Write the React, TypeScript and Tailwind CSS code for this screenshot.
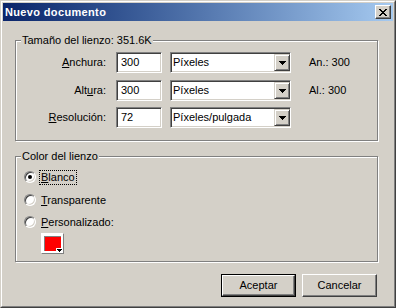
function CloseGlyph() {
  return (
    <svg width="8" height="7" viewBox="0 0 8 7" shapeRendering="crispEdges">
      <path
        fill="#000"
        d="M0 0h2v1H0z M6 0h2v1H6z M1 1h2v1H1z M5 1h2v1H5z M2 2h4v1H2z M3 3h2v1H3z M2 4h4v1H2z M1 5h2v1H1z M5 5h2v1H5z M0 6h2v1H0z M6 6h2v1H6z"
      />
    </svg>
  )
}

function DownArrow() {
  return (
    <svg width="7" height="4" viewBox="0 0 7 4" shapeRendering="crispEdges">
      <path fill="#000" d="M0 0h7v1H0z M1 1h5v1H1z M2 2h3v1H2z M3 3h1v1H3z" />
    </svg>
  )
}

function TextBox({ value }: { value: string }) {
  return (
    <div className="ml-[10px] flex h-[21px] w-[46px] items-center border border-t-[#808080] border-l-[#808080] border-b-white border-r-white bg-white pl-[4px] shadow-[inset_1px_1px_0_#404040,inset_-1px_-1px_0_#d4d0c8]">
      {value}
    </div>
  )
}

function Combo({ value }: { value: string }) {
  return (
    <div className="ml-[8px] flex h-[21px] w-[121px] items-center border border-t-[#808080] border-l-[#808080] border-b-white border-r-white bg-white pl-[2px] shadow-[inset_1px_1px_0_#404040,inset_-1px_-1px_0_#d4d0c8]">
      <span className="flex-1">{value}</span>
      <div className="flex h-[17px] w-[16px] items-center justify-center border border-t-[#d4d0c8] border-l-[#d4d0c8] border-b-[#404040] border-r-[#404040] bg-[#d4d0c8] shadow-[inset_1px_1px_0_#fff,inset_-1px_-1px_0_#808080]">
        <DownArrow />
      </div>
    </div>
  )
}

function Radio({ checked, focused, children }: { checked?: boolean; focused?: boolean; children: React.ReactNode }) {
  return (
    <div className="flex h-[16px] items-center pl-[8px]">
      <div className="flex h-[12px] w-[12px] items-center justify-center rounded-full border border-t-[#808080] border-l-[#808080] border-b-white border-r-white bg-white shadow-[inset_1px_1px_0_#404040,inset_-1px_-1px_0_#d4d0c8]">
        {checked && <div className="h-[4px] w-[4px] rounded-full bg-black" />}
      </div>
      <span
        className={
          focused
            ? "ml-[3px] border border-dotted border-black px-px leading-[13px]"
            : "ml-[3px] border border-transparent px-px leading-[13px]"
        }
      >
        {children}
      </span>
    </div>
  )
}

export default function App() {
  return (
    <div className="h-[308px] w-[396px] border border-t-[#d4d0c8] border-l-[#d4d0c8] border-b-[#404040] border-r-[#404040] bg-[#d4d0c8] font-['Liberation_Sans',Arial,sans-serif] text-[11px] text-black">
      <div className="flex h-full flex-col border border-t-white border-l-white border-b-[#808080] border-r-[#808080] p-px">
        {/* title bar */}
        <div className="flex h-[18px] items-center bg-gradient-to-r from-[#0a246a] to-[#a6caf0] pl-[2px] pr-[2px]">
          <span className="flex-1 font-bold tracking-[0.35px] text-white">Nuevo documento</span>
          <div className="flex h-[14px] w-[16px] items-center justify-center border border-t-white border-l-white border-b-[#404040] border-r-[#404040] bg-[#d4d0c8] shadow-[inset_-1px_-1px_0_#808080]">
            <CloseGlyph />
          </div>
        </div>

        <div className="flex flex-col pl-[12px] pr-[15px] pt-[13px]">
          {/* canvas size */}
          <fieldset className="border border-[#808080] pb-[12px] pt-[5px] shadow-[1px_1px_0_#fff,inset_1px_1px_0_#fff]">
            <legend className="ml-[5px] bg-[#d4d0c8] px-px leading-[13px]">Tamaño del lienzo: 351.6K</legend>
            <div className="flex h-[21px] items-center">
              <span className="w-[90px] text-right">
                <u>A</u>nchura:
              </span>
              <TextBox value="300" />
              <Combo value="Píxeles" />
              <span className="ml-[18px]">An.: 300</span>
            </div>
            <div className="mt-[7px] flex h-[21px] items-center">
              <span className="w-[90px] text-right">
                Alt<u>u</u>ra:
              </span>
              <TextBox value="300" />
              <Combo value="Píxeles" />
              <span className="ml-[18px]">Al.: 300</span>
            </div>
            <div className="mt-[6px] flex h-[21px] items-center">
              <span className="w-[90px] text-right">
                <u>R</u>esolución:
              </span>
              <TextBox value="72" />
              <Combo value="Píxeles/pulgada" />
            </div>
          </fieldset>

          {/* canvas colour */}
          <fieldset className="mt-[9px] border border-[#808080] pb-[7px] pt-[6px] shadow-[1px_1px_0_#fff,inset_1px_1px_0_#fff]">
            <legend className="ml-[5px] bg-[#d4d0c8] px-px leading-[13px]">Color del lienzo</legend>
            <Radio checked focused>
              <u>B</u>lanco
            </Radio>
            <div className="mt-[7px]">
              <Radio>
                <u>T</u>ransparente
              </Radio>
            </div>
            <div className="mt-[6px]">
              <Radio>
                <u>P</u>ersonalizado:
              </Radio>
            </div>
            <div className="relative ml-[25px] mt-[3px] h-[21px] w-[23px] border border-t-white border-l-white border-b-[#808080] border-r-[#808080] bg-white p-[2px]">
              <div className="h-full w-full bg-[#ff0000] shadow-[inset_1px_1px_0_#808080]" />
              <div className="absolute bottom-0 right-0 flex h-[5px] w-[7px] items-end justify-center bg-white pb-px">
                <svg width="5" height="3" viewBox="0 0 5 3" shapeRendering="crispEdges">
                  <path fill="#000" d="M0 0h5v1H0z M1 1h3v1H1z M2 2h1v1H2z" />
                </svg>
              </div>
            </div>
          </fieldset>

          {/* buttons */}
          <div className="mr-px mt-[12px] flex justify-end gap-[6px]">
            <button className="h-[23px] w-[75px] border border-black bg-[#d4d0c8] p-0">
              <div className="flex h-full w-full items-center justify-center border border-t-white border-l-white border-b-[#404040] border-r-[#404040] shadow-[inset_-1px_-1px_0_#808080]">
                Aceptar
              </div>
            </button>
            <button className="flex h-[23px] w-[75px] items-center justify-center border border-t-white border-l-white border-b-[#404040] border-r-[#404040] bg-[#d4d0c8] shadow-[inset_-1px_-1px_0_#808080]">
              Cancelar
            </button>
          </div>
        </div>
      </div>
    </div>
  )
}
